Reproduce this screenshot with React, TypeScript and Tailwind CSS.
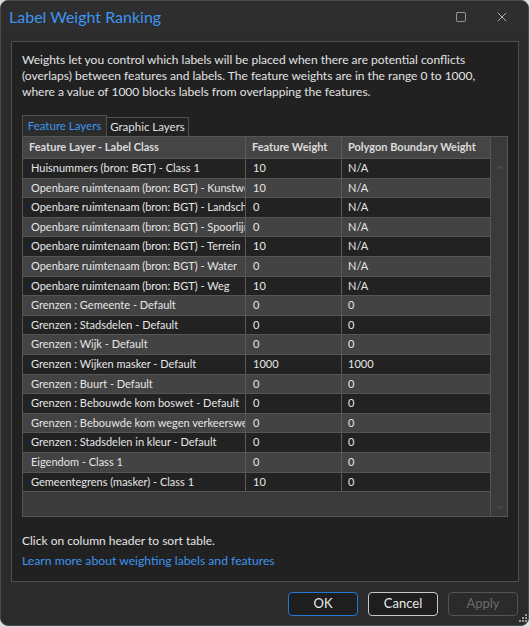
import { X, Square, ChevronUp, ChevronDown } from 'lucide-react'

const ROWS: [string, string, string][] = [
  ['Huisnummers (bron: BGT) - Class 1', '10', 'N/A'],
  ['Openbare ruimtenaam (bron: BGT) - Kunstwerk', '10', 'N/A'],
  ['Openbare ruimtenaam (bron: BGT) - Landschappelijk', '0', 'N/A'],
  ['Openbare ruimtenaam (bron: BGT) - Spoorlijn', '0', 'N/A'],
  ['Openbare ruimtenaam (bron: BGT) - Terrein', '10', 'N/A'],
  ['Openbare ruimtenaam (bron: BGT) - Water', '0', 'N/A'],
  ['Openbare ruimtenaam (bron: BGT) - Weg', '10', 'N/A'],
  ['Grenzen : Gemeente - Default', '0', '0'],
  ['Grenzen : Stadsdelen - Default', '0', '0'],
  ['Grenzen : Wijk - Default', '0', '0'],
  ['Grenzen : Wijken masker - Default', '1000', '1000'],
  ['Grenzen : Buurt - Default', '0', '0'],
  ['Grenzen : Bebouwde kom boswet - Default', '0', '0'],
  ['Grenzen : Bebouwde kom wegen verkeerswet - Default', '0', '0'],
  ['Grenzen : Stadsdelen in kleur - Default', '0', '0'],
  ['Eigendom - Class 1', '0', '0'],
  ['Gemeentegrens (masker) - Class 1', '10', '0'],
]

export default function App() {
  return (
    <div className="w-[530px] h-[627px] bg-[#d9dde3] text-[13px] text-[#e4e4e4]" style={{ fontFamily: 'Lato, "Noto Sans", sans-serif' }}>
      <div className="w-[529px] h-[626px] rounded-[8px] border border-[#4a4a4a] bg-[#2b2b2b] overflow-hidden flex flex-col">
        {/* title bar */}
        <div className="h-[31px] bg-[#2e2e2e] flex items-center pl-[8px] shrink-0">
          <span className="text-[16px] text-[#3d95f0] flex-1">Label Weight Ranking</span>
          <div className="w-[46px] flex justify-center"><Square size={12} strokeWidth={1.2} className="text-[#dcdcdc]" /></div>
          <div className="w-[36px] flex justify-center mr-[8px]"><X size={16} strokeWidth={1.1} className="text-[#dcdcdc]" /></div>
        </div>

        {/* panel */}
        <div className="mt-[9px] ml-[10px] w-[508px] h-[541px] border border-[#4f4f4f] bg-[#212121] flex flex-col px-[10px] shrink-0">
          <p className="mt-[10px] leading-[16px] whitespace-nowrap text-[12px] text-[#e2e2e2]">
            Weights let you control which labels will be placed when there are potential conflicts<br />
            (overlaps) between features and labels. The feature weights are in the range 0 to 1000,<br />
            where a value of 1000 blocks labels from overlapping the features.
          </p>

          {/* tabs */}
          <div className="mt-[15px] flex items-end h-[21px] text-[11.5px] whitespace-nowrap">
            <div className="h-[21px] w-[85px] border border-b-0 border-[#4f4f4f] bg-[#2c2c2c] flex items-center justify-center text-[#3d95f0]">Feature Layers</div>
            <div className="h-[19px] w-[82px] border border-l-0 border-b-0 border-[#4f4f4f] bg-[#212121] flex items-center justify-center text-[#e0e0e0]">Graphic Layers</div>
          </div>

          {/* table */}
          <div className="w-[486px] h-[381px] border border-[#555555] bg-[#3b3b3b] flex text-[11px] whitespace-nowrap">
            <div className="w-[467px] flex flex-col">
              <div className="h-[22px] bg-[#454545] flex font-bold text-[#dcdcdc] border-b border-[#555555] shrink-0">
                <div className="w-[223px] px-[6px] flex items-center border-r border-[#5a5a5a] overflow-hidden">Feature Layer - Label Class</div>
                <div className="w-[96px] px-[6px] flex items-center border-r border-[#5a5a5a] overflow-hidden">Feature Weight</div>
                <div className="w-[148px] px-[6px] flex items-center overflow-hidden">Polygon Boundary Weight</div>
              </div>
              {ROWS.map((r, i) => (
                <div key={i} className={`h-[19.6px] flex border-b border-[#555555] shrink-0 text-[#e6e6e6] ${i % 2 === 0 ? 'bg-[#222222]' : 'bg-[#434343]'}`}>
                  <div className="w-[223px] pl-[8px] pr-[1px] flex items-center border-r border-[#5a5a5a] overflow-hidden">{r[0]}</div>
                  <div className="w-[96px] px-[7px] flex items-center border-r border-[#5a5a5a]">{r[1]}</div>
                  <div className="w-[147px] px-[6px] flex items-center">{r[2]}</div>
                </div>
              ))}
            </div>
            <div className="w-[17px] border-l border-[#555555] bg-[#3a3a3a] flex flex-col items-center justify-between pt-[25px] pb-[3px]">
              <ChevronUp size={11} strokeWidth={1.5} className="text-[#6a6a6a]" />
              <ChevronDown size={11} strokeWidth={1.5} className="text-[#6a6a6a]" />
            </div>
          </div>

          <p className="mt-[15px] text-[12px] leading-[18px]">Click on column header to sort table.</p>
          <p className="mt-[2px] text-[12.2px] leading-[18px] text-[#3d95f0]">Learn more about weighting labels and features</p>
        </div>

        {/* buttons */}
        <div className="mt-[10px] flex justify-end gap-[10px] pr-[10px] text-[13px] relative">
          <button className="w-[70px] h-[24px] rounded-[4px] border-[1.5px] border-[#1f7ad6] bg-[#1e1e1e] text-[#e8e8e8]">OK</button>
          <button className="w-[70px] h-[24px] rounded-[4px] border border-[#c8c8c8] bg-[#1e1e1e] text-[#e8e8e8]">Cancel</button>
          <button className="w-[70px] h-[24px] rounded-[4px] border border-[#555555] bg-[#2b2b2b] text-[#6a6a6a]">Apply</button>
          <div className="absolute right-[1px] top-[22px] grid grid-cols-3 gap-[1px]">
            <span />
            <span />
            <span className="w-[2px] h-[2px] bg-[#9a9a9a]" />
            <span />
            <span className="w-[2px] h-[2px] bg-[#9a9a9a]" />
            <span className="w-[2px] h-[2px] bg-[#9a9a9a]" />
            <span className="w-[2px] h-[2px] bg-[#9a9a9a]" />
            <span className="w-[2px] h-[2px] bg-[#9a9a9a]" />
            <span className="w-[2px] h-[2px] bg-[#9a9a9a]" />
          </div>
        </div>
      </div>
    </div>
  )
}
